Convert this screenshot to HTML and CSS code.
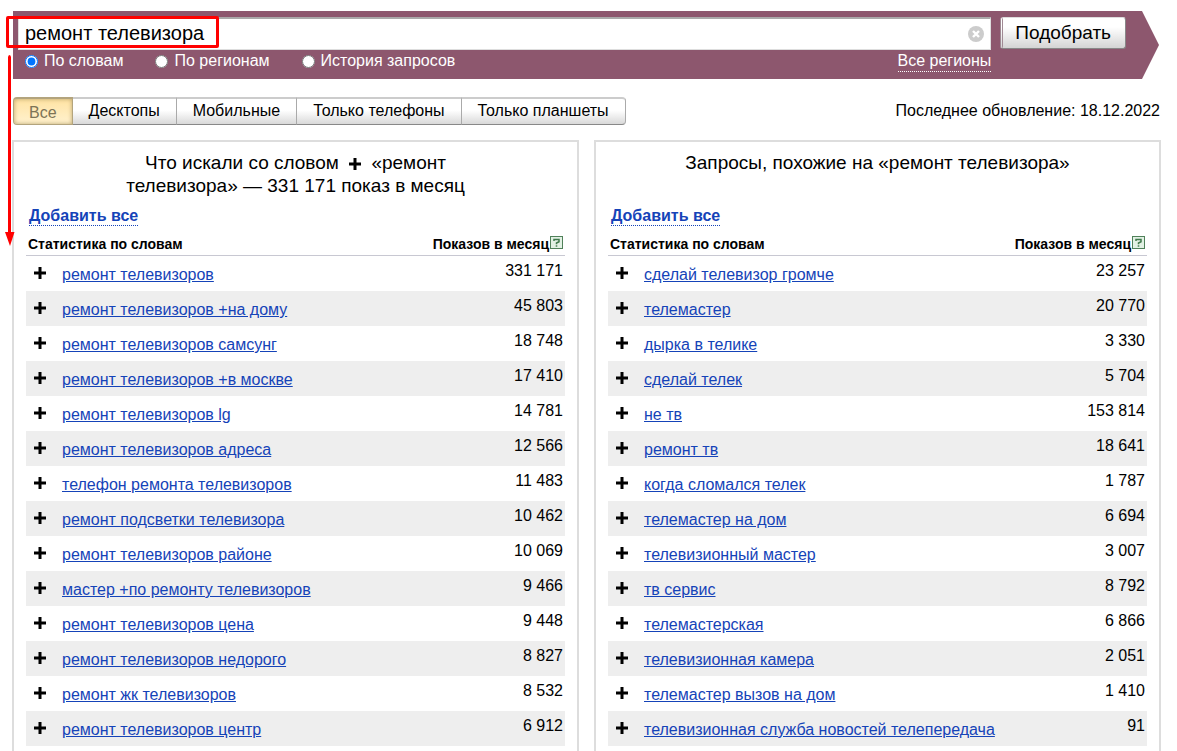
FILE: index.html
```
<!DOCTYPE html>
<html lang="ru">
<head>
<meta charset="utf-8">
<title>Подбор слов</title>
<link rel="stylesheet" href="styles.css">
</head>
<body>
<svg class="sprite" aria-hidden="true">
  <symbol id="plus" viewBox="0 0 12 12"><path d="M4.500 0h3v4.500H12v3H7.500V12h-3V7.500H0v-3h4.500z" fill="#000"/></symbol>
  <symbol id="help" viewBox="0 0 13 13"><rect x=".5" y=".5" width="12" height="12" fill="#e2f1e4" stroke="#50815a"/><path d="M4 5V3.500h5v2.200L6.500 7v1.200" fill="none" stroke="#40794c" stroke-width="1.500"/><path d="M5.700 9.300h1.600v1.400H5.700z" fill="#40794c"/></symbol>
</svg>
<div class="page">
  <form class="banner">
    <div class="search">
      <div class="field">
        <input class="query" type="text" value="ремонт телевизора" aria-label="Запрос">
        <button class="clear" type="button" aria-label="Очистить"><svg viewBox="0 0 16 16" width="16" height="16"><circle cx="8" cy="8" r="8" fill="#ccc"/><path d="M5 5l6 6M11 5l-6 6" stroke="#fff" stroke-width="2.400"/></svg></button>
      </div>
      <div class="options">
        <label class="option"><input class="radio" type="radio" name="mode" checked>По словам</label>
        <label class="option"><input class="radio" type="radio" name="mode">По регионам</label>
        <label class="option"><input class="radio" type="radio" name="mode">История запросов</label>
        <a class="regions" href="#">Все регионы</a>
      </div>
    </div>
    <button class="submit" type="button">Подобрать</button>
  </form>

  <div class="toolbar">
    <div class="tabs">
      <button class="tab active" type="button">Все</button>
      <button class="tab" type="button">Десктопы</button>
      <button class="tab" type="button">Мобильные</button>
      <button class="tab" type="button">Только телефоны</button>
      <button class="tab" type="button">Только планшеты</button>
    </div>
    <span>Последнее обновление: 18.12.2022</span>
  </div>

  <main class="panels">
    <section class="panel">
      <h2 class="title">Что искали со словом <svg class="title-plus" width="12" height="12"><use href="#plus"/></svg> «ремонт телевизора» — 331 171 показ в месяц</h2>
      <div class="add-row"><a class="add-all" href="#">Добавить все</a></div>
      <table class="stats">
        <thead><tr><th colspan="2">Статистика по словам</th><th class="num"><span class="heading">Показов в месяц<svg width="13" height="13"><use href="#help"/></svg></span></th></tr></thead>
        <tbody>
          <tr><td class="add"><button class="plus" type="button" aria-label="Добавить"><svg width="12" height="12"><use href="#plus"/></svg></button></td><td><a href="#">ремонт телевизоров</a></td><td class="num">331 171</td></tr>
          <tr><td class="add"><button class="plus" type="button" aria-label="Добавить"><svg width="12" height="12"><use href="#plus"/></svg></button></td><td><a href="#">ремонт телевизоров +на дому</a></td><td class="num">45 803</td></tr>
          <tr><td class="add"><button class="plus" type="button" aria-label="Добавить"><svg width="12" height="12"><use href="#plus"/></svg></button></td><td><a href="#">ремонт телевизоров самсунг</a></td><td class="num">18 748</td></tr>
          <tr><td class="add"><button class="plus" type="button" aria-label="Добавить"><svg width="12" height="12"><use href="#plus"/></svg></button></td><td><a href="#">ремонт телевизоров +в москве</a></td><td class="num">17 410</td></tr>
          <tr><td class="add"><button class="plus" type="button" aria-label="Добавить"><svg width="12" height="12"><use href="#plus"/></svg></button></td><td><a href="#">ремонт телевизоров lg</a></td><td class="num">14 781</td></tr>
          <tr><td class="add"><button class="plus" type="button" aria-label="Добавить"><svg width="12" height="12"><use href="#plus"/></svg></button></td><td><a href="#">ремонт телевизоров адреса</a></td><td class="num">12 566</td></tr>
          <tr><td class="add"><button class="plus" type="button" aria-label="Добавить"><svg width="12" height="12"><use href="#plus"/></svg></button></td><td><a href="#">телефон ремонта телевизоров</a></td><td class="num">11 483</td></tr>
          <tr><td class="add"><button class="plus" type="button" aria-label="Добавить"><svg width="12" height="12"><use href="#plus"/></svg></button></td><td><a href="#">ремонт подсветки телевизора</a></td><td class="num">10 462</td></tr>
          <tr><td class="add"><button class="plus" type="button" aria-label="Добавить"><svg width="12" height="12"><use href="#plus"/></svg></button></td><td><a href="#">ремонт телевизоров районе</a></td><td class="num">10 069</td></tr>
          <tr><td class="add"><button class="plus" type="button" aria-label="Добавить"><svg width="12" height="12"><use href="#plus"/></svg></button></td><td><a href="#">мастер +по ремонту телевизоров</a></td><td class="num">9 466</td></tr>
          <tr><td class="add"><button class="plus" type="button" aria-label="Добавить"><svg width="12" height="12"><use href="#plus"/></svg></button></td><td><a href="#">ремонт телевизоров цена</a></td><td class="num">9 448</td></tr>
          <tr><td class="add"><button class="plus" type="button" aria-label="Добавить"><svg width="12" height="12"><use href="#plus"/></svg></button></td><td><a href="#">ремонт телевизоров недорого</a></td><td class="num">8 827</td></tr>
          <tr><td class="add"><button class="plus" type="button" aria-label="Добавить"><svg width="12" height="12"><use href="#plus"/></svg></button></td><td><a href="#">ремонт жк телевизоров</a></td><td class="num">8 532</td></tr>
          <tr><td class="add"><button class="plus" type="button" aria-label="Добавить"><svg width="12" height="12"><use href="#plus"/></svg></button></td><td><a href="#">ремонт телевизоров центр</a></td><td class="num">6 912</td></tr>
        </tbody>
      </table>
    </section>
    <section class="panel">
      <h2 class="title">Запросы, похожие на «ремонт телевизора»</h2>
      <div class="add-row"><a class="add-all" href="#">Добавить все</a></div>
      <table class="stats">
        <thead><tr><th colspan="2">Статистика по словам</th><th class="num"><span class="heading">Показов в месяц<svg width="13" height="13"><use href="#help"/></svg></span></th></tr></thead>
        <tbody>
          <tr><td class="add"><button class="plus" type="button" aria-label="Добавить"><svg width="12" height="12"><use href="#plus"/></svg></button></td><td><a href="#">сделай телевизор громче</a></td><td class="num">23 257</td></tr>
          <tr><td class="add"><button class="plus" type="button" aria-label="Добавить"><svg width="12" height="12"><use href="#plus"/></svg></button></td><td><a href="#">телемастер</a></td><td class="num">20 770</td></tr>
          <tr><td class="add"><button class="plus" type="button" aria-label="Добавить"><svg width="12" height="12"><use href="#plus"/></svg></button></td><td><a href="#">дырка в телике</a></td><td class="num">3 330</td></tr>
          <tr><td class="add"><button class="plus" type="button" aria-label="Добавить"><svg width="12" height="12"><use href="#plus"/></svg></button></td><td><a href="#">сделай телек</a></td><td class="num">5 704</td></tr>
          <tr><td class="add"><button class="plus" type="button" aria-label="Добавить"><svg width="12" height="12"><use href="#plus"/></svg></button></td><td><a href="#">не тв</a></td><td class="num">153 814</td></tr>
          <tr><td class="add"><button class="plus" type="button" aria-label="Добавить"><svg width="12" height="12"><use href="#plus"/></svg></button></td><td><a href="#">ремонт тв</a></td><td class="num">18 641</td></tr>
          <tr><td class="add"><button class="plus" type="button" aria-label="Добавить"><svg width="12" height="12"><use href="#plus"/></svg></button></td><td><a href="#">когда сломался телек</a></td><td class="num">1 787</td></tr>
          <tr><td class="add"><button class="plus" type="button" aria-label="Добавить"><svg width="12" height="12"><use href="#plus"/></svg></button></td><td><a href="#">телемастер на дом</a></td><td class="num">6 694</td></tr>
          <tr><td class="add"><button class="plus" type="button" aria-label="Добавить"><svg width="12" height="12"><use href="#plus"/></svg></button></td><td><a href="#">телевизионный мастер</a></td><td class="num">3 007</td></tr>
          <tr><td class="add"><button class="plus" type="button" aria-label="Добавить"><svg width="12" height="12"><use href="#plus"/></svg></button></td><td><a href="#">тв сервис</a></td><td class="num">8 792</td></tr>
          <tr><td class="add"><button class="plus" type="button" aria-label="Добавить"><svg width="12" height="12"><use href="#plus"/></svg></button></td><td><a href="#">телемастерская</a></td><td class="num">6 866</td></tr>
          <tr><td class="add"><button class="plus" type="button" aria-label="Добавить"><svg width="12" height="12"><use href="#plus"/></svg></button></td><td><a href="#">телевизионная камера</a></td><td class="num">2 051</td></tr>
          <tr><td class="add"><button class="plus" type="button" aria-label="Добавить"><svg width="12" height="12"><use href="#plus"/></svg></button></td><td><a href="#">телемастер вызов на дом</a></td><td class="num">1 410</td></tr>
          <tr><td class="add"><button class="plus" type="button" aria-label="Добавить"><svg width="12" height="12"><use href="#plus"/></svg></button></td><td><a href="#">телевизионная служба новостей телепередача</a></td><td class="num">91</td></tr>
        </tbody>
      </table>
    </section>
  </main>
</div>
<div class="mark-box"></div>
<svg class="mark-arrow" width="10" height="191" viewBox="0 0 10 191"><path d="M3 2.500Q3 0 4.500 0T6 2.500V177h3.500L5 191 0 177h3z" fill="#f00"/></svg>
</body>
</html>
```
FILE: styles.css
```
* { box-sizing: border-box; }
body {
  margin: 0;
  background: #fff;
  color: #000;
  font: 16px/20px "Liberation Sans", Arial, sans-serif;
}
button, input { font: inherit; color: inherit; margin: 0; }
.sprite { display: none; }
.page {
  display: flex;
  flex-direction: column;
  min-height: 100vh;
  padding: 11px 16px 0 12px;
}
.banner {
  display: flex;
  align-items: flex-start;
  gap: 9px;
  height: 68px;
  margin: 0 2px 0 1px;
  padding: 6px 33px 0 5px;
  background: #8d576e;
  clip-path: polygon(0 0, calc(100% - 17px) 0, 100% 50%, calc(100% - 17px) 100%, 0 100%);
}
.search { flex: 1; }
.field {
  display: flex;
  align-items: center;
  height: 33px;
  padding-right: 6px;
  background: #fff;
  border: 1px solid #ddd;
  border-top: 2px solid #aaa;
}
.query {
  flex: 1;
  min-width: 0;
  padding: 0 6px 2px;
  border: 0;
  outline: 0;
  background: none;
  font-size: 20px;
}
.clear { display: flex; padding: 0; border: 0; background: none; }
.options {
  display: flex;
  align-items: flex-start;
  gap: 32px;
  padding: 1px 0 0 7px;
  color: #fff;
}
.option { display: flex; align-items: center; gap: 6px; }
.radio { width: 13px; height: 13px; }
.regions {
  margin-left: auto;
  color: #fff;
  text-decoration: none;
  border-bottom: 1px dotted #fff;
}
.submit {
  height: 32px;
  padding: 0 14px 0 12px;
  border: 1px solid #888;
  border-top-color: #ddd;
  border-left: 3px double #a08a94;
  border-radius: 3px;
  background: linear-gradient(#fff 30%, #d4d4d4);
  font-size: 19px;
}
.toolbar {
  display: flex;
  justify-content: space-between;
  padding: 18px 1px 0;
}
.tabs { display: flex; height: 28px; }
.toolbar > span { padding-top: 4px; }
.tab {
  padding: 0 16px 2px;
  border: 1px solid #999;
  border-width: 2px 1px 1px 0;
  border-color: #ccc #aaa #888;
  background: linear-gradient(#fff 45%, #d9d9d9);
}
.tab:last-child { border-radius: 0 4px 4px 0; }
.tab.active {
  padding: 2px 15px 0;
  border-left-width: 1px;
  border-color: #b3a47d;
  border-radius: 4px 0 0 4px;
  background: linear-gradient(#ffe3a3, #fff2cf);
  box-shadow: inset 0 0 4px #b9a26b;
  color: #7d7457;
}
.panels {
  flex: 1;
  display: grid;
  grid-template-columns: 1fr 1fr;
  gap: 15px;
  padding-top: 15px;
}
.panel {
  padding: 9px 12px 0;
  border: 2px solid #ddd;
  border-bottom: 0;
}
.title {
  min-height: 46px;
  margin: 0 68px;
  font-size: 19px;
  line-height: 23px;
  font-weight: normal;
  text-align: center;
}
.title-plus { margin: 0 5px; vertical-align: -1px; }
.add-row { display: flex; padding: 10px 0 0 3px; }
.add-all {
  color: #1543b8;
  font-weight: bold;
  line-height: 18px;
  text-decoration: none;
  border-bottom: 1px dotted #1543b8;
}
.stats { width: 100%; margin-top: 6px; border-collapse: separate; border-spacing: 0; }
.stats th {
  height: 24px;
  padding: 0 2px;
  border-bottom: 1px solid #c8c8d2;
  font-size: 14px;
  line-height: 20px;
  text-align: left;
}
.stats td { height: 35px; padding: 9px 0 0; vertical-align: top; }
.stats tbody tr:nth-child(even) { background: #eee; }
.stats a { color: #1543b8; }
.stats .add { width: 36px; padding: 11px 0 0 8px; }
.stats .num { padding: 5px 2px 0; text-align: right; }
.stats th.num { padding-top: 0; }
.heading { display: inline-flex; gap: 1px; vertical-align: top; }
.heading svg { margin-top: 2px; }
.plus { display: flex; padding: 0; border: 0; background: none; }
.mark-box {
  position: absolute;
  left: 6px;
  top: 16px;
  width: 213px;
  height: 32px;
  border: 3px solid #f00;
  border-radius: 2px;
}
.mark-arrow { position: absolute; left: 5px; top: 55px; }
```
